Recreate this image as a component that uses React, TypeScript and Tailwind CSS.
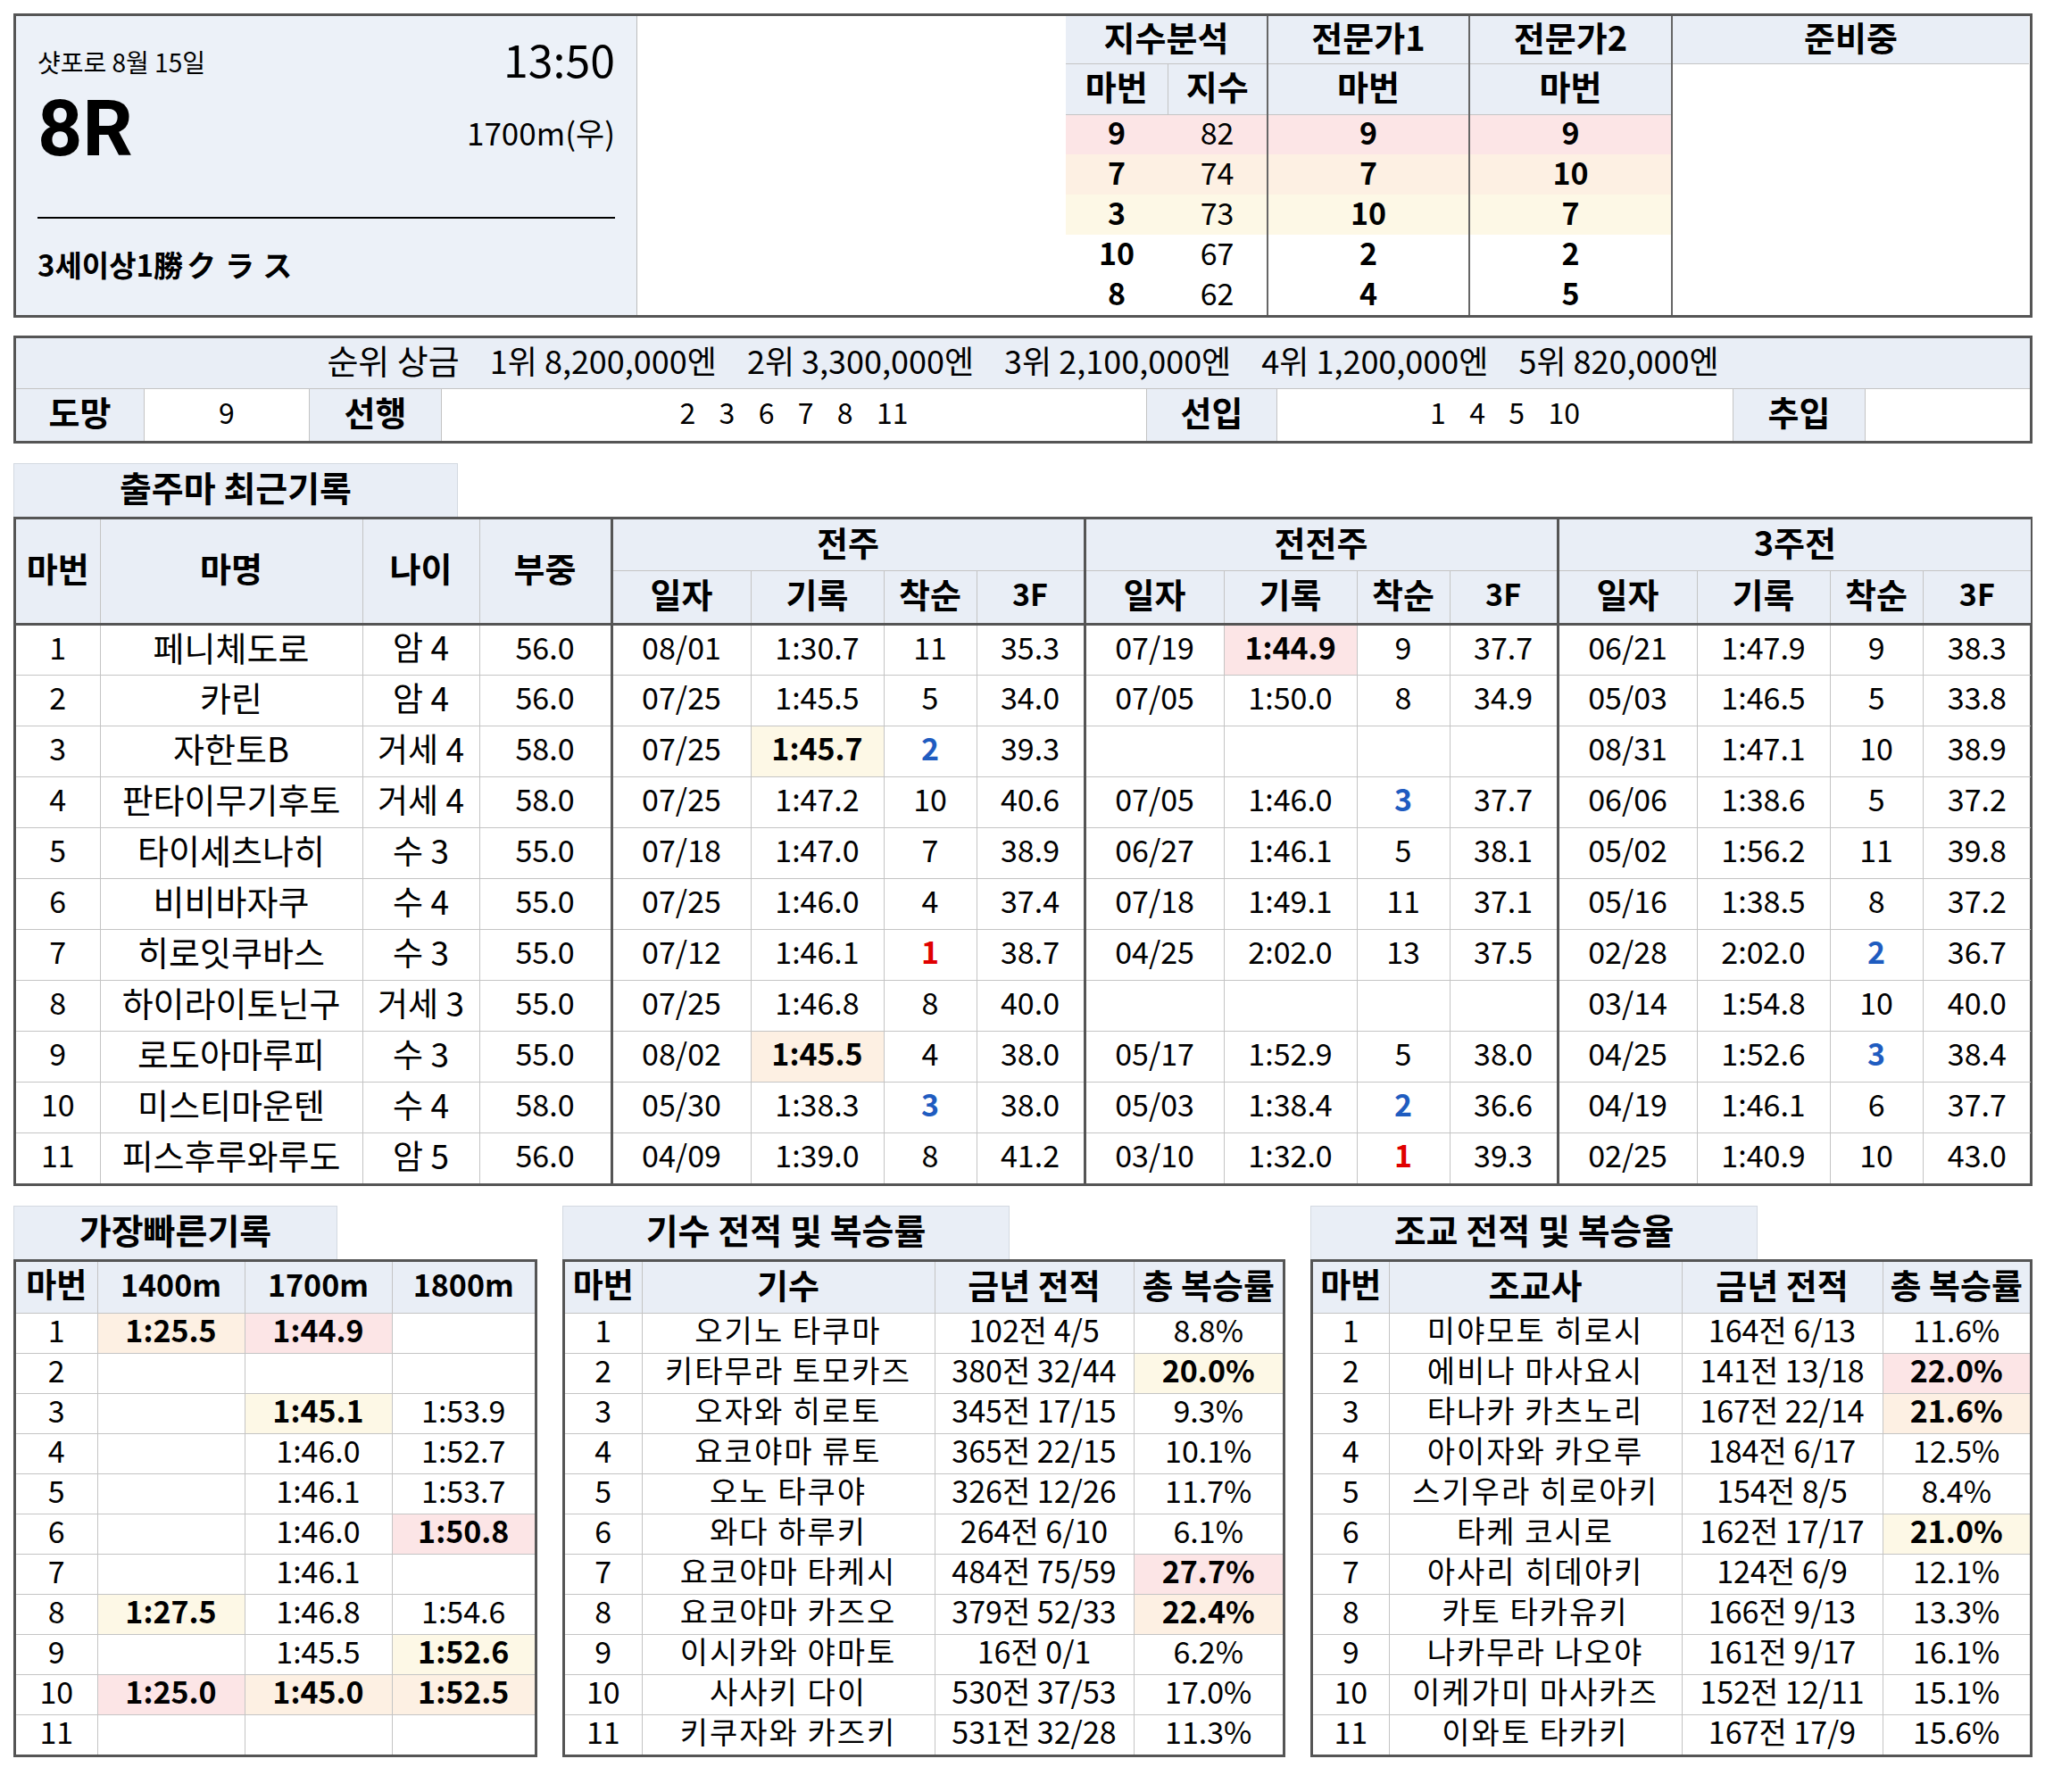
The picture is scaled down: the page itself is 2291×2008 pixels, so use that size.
import React from 'react';

const FONT = "font-['Noto_Sans_CJK_KR','Noto_Sans',sans-serif]";
const HEAD_BG = 'bg-[#e9eef6]';
const HL: Record<string, string> = {
  p: 'bg-[#fce5e6]',
  o: 'bg-[#fdf0e3]',
  y: 'bg-[#fdf8e6]',
};

type Race = { d: string; t: string; r: string; f: string; h?: string };

const empty: Race = { d: '', t: '', r: '', f: '' };

const horses: { no: number; name: string; age: string; wt: string; runs: Race[] }[] = [
  { no: 1, name: '페니체도로', age: '암 4', wt: '56.0', runs: [
    { d: '08/01', t: '1:30.7', r: '11', f: '35.3' },
    { d: '07/19', t: '1:44.9', r: '9', f: '37.7', h: 'p' },
    { d: '06/21', t: '1:47.9', r: '9', f: '38.3' },
  ] },
  { no: 2, name: '카린', age: '암 4', wt: '56.0', runs: [
    { d: '07/25', t: '1:45.5', r: '5', f: '34.0' },
    { d: '07/05', t: '1:50.0', r: '8', f: '34.9' },
    { d: '05/03', t: '1:46.5', r: '5', f: '33.8' },
  ] },
  { no: 3, name: '자한토B', age: '거세 4', wt: '58.0', runs: [
    { d: '07/25', t: '1:45.7', r: '2', f: '39.3', h: 'y' },
    empty,
    { d: '08/31', t: '1:47.1', r: '10', f: '38.9' },
  ] },
  { no: 4, name: '판타이무기후토', age: '거세 4', wt: '58.0', runs: [
    { d: '07/25', t: '1:47.2', r: '10', f: '40.6' },
    { d: '07/05', t: '1:46.0', r: '3', f: '37.7' },
    { d: '06/06', t: '1:38.6', r: '5', f: '37.2' },
  ] },
  { no: 5, name: '타이세츠나히', age: '수 3', wt: '55.0', runs: [
    { d: '07/18', t: '1:47.0', r: '7', f: '38.9' },
    { d: '06/27', t: '1:46.1', r: '5', f: '38.1' },
    { d: '05/02', t: '1:56.2', r: '11', f: '39.8' },
  ] },
  { no: 6, name: '비비바자쿠', age: '수 4', wt: '55.0', runs: [
    { d: '07/25', t: '1:46.0', r: '4', f: '37.4' },
    { d: '07/18', t: '1:49.1', r: '11', f: '37.1' },
    { d: '05/16', t: '1:38.5', r: '8', f: '37.2' },
  ] },
  { no: 7, name: '히로잇쿠바스', age: '수 3', wt: '55.0', runs: [
    { d: '07/12', t: '1:46.1', r: '1', f: '38.7' },
    { d: '04/25', t: '2:02.0', r: '13', f: '37.5' },
    { d: '02/28', t: '2:02.0', r: '2', f: '36.7' },
  ] },
  { no: 8, name: '하이라이토닌구', age: '거세 3', wt: '55.0', runs: [
    { d: '07/25', t: '1:46.8', r: '8', f: '40.0' },
    empty,
    { d: '03/14', t: '1:54.8', r: '10', f: '40.0' },
  ] },
  { no: 9, name: '로도아마루피', age: '수 3', wt: '55.0', runs: [
    { d: '08/02', t: '1:45.5', r: '4', f: '38.0', h: 'o' },
    { d: '05/17', t: '1:52.9', r: '5', f: '38.0' },
    { d: '04/25', t: '1:52.6', r: '3', f: '38.4' },
  ] },
  { no: 10, name: '미스티마운텐', age: '수 4', wt: '58.0', runs: [
    { d: '05/30', t: '1:38.3', r: '3', f: '38.0' },
    { d: '05/03', t: '1:38.4', r: '2', f: '36.6' },
    { d: '04/19', t: '1:46.1', r: '6', f: '37.7' },
  ] },
  { no: 11, name: '피스후루와루도', age: '암 5', wt: '56.0', runs: [
    { d: '04/09', t: '1:39.0', r: '8', f: '41.2' },
    { d: '03/10', t: '1:32.0', r: '1', f: '39.3' },
    { d: '02/25', t: '1:40.9', r: '10', f: '43.0' },
  ] },
];

// [value, highlight]
const fastest: [string, string][][] = [
  [['1:25.5', 'o'], ['1:44.9', 'p'], ['', '']],
  [['', ''], ['', ''], ['', '']],
  [['', ''], ['1:45.1', 'y'], ['1:53.9', '']],
  [['', ''], ['1:46.0', ''], ['1:52.7', '']],
  [['', ''], ['1:46.1', ''], ['1:53.7', '']],
  [['', ''], ['1:46.0', ''], ['1:50.8', 'p']],
  [['', ''], ['1:46.1', ''], ['', '']],
  [['1:27.5', 'y'], ['1:46.8', ''], ['1:54.6', '']],
  [['', ''], ['1:45.5', ''], ['1:52.6', 'y']],
  [['1:25.0', 'p'], ['1:45.0', 'o'], ['1:52.5', 'o']],
  [['', ''], ['', ''], ['', '']],
];

const jockeys: [string, string, string, string][] = [
  ['오기노 타쿠마', '102전 4/5', '8.8%', ''],
  ['키타무라 토모카즈', '380전 32/44', '20.0%', 'y'],
  ['오자와 히로토', '345전 17/15', '9.3%', ''],
  ['요코야마 류토', '365전 22/15', '10.1%', ''],
  ['오노 타쿠야', '326전 12/26', '11.7%', ''],
  ['와다 하루키', '264전 6/10', '6.1%', ''],
  ['요코야마 타케시', '484전 75/59', '27.7%', 'p'],
  ['요코야마 카즈오', '379전 52/33', '22.4%', 'o'],
  ['이시카와 야마토', '16전 0/1', '6.2%', ''],
  ['사사키 다이', '530전 37/53', '17.0%', ''],
  ['키쿠자와 카즈키', '531전 32/28', '11.3%', ''],
];

const trainers: [string, string, string, string][] = [
  ['미야모토 히로시', '164전 6/13', '11.6%', ''],
  ['에비나 마사요시', '141전 13/18', '22.0%', 'p'],
  ['타나카 카츠노리', '167전 22/14', '21.6%', 'o'],
  ['아이자와 카오루', '184전 6/17', '12.5%', ''],
  ['스기우라 히로아키', '154전 8/5', '8.4%', ''],
  ['타케 코시로', '162전 17/17', '21.0%', 'y'],
  ['아사리 히데아키', '124전 6/9', '12.1%', ''],
  ['카토 타카유키', '166전 9/13', '13.3%', ''],
  ['나카무라 나오야', '161전 9/17', '16.1%', ''],
  ['이케가미 마사카즈', '152전 12/11', '15.1%', ''],
  ['이와토 타카키', '167전 17/9', '15.6%', ''],
];

const index = [
  ['9', '82', '9', '9'],
  ['7', '74', '7', '10'],
  ['3', '73', '10', '7'],
  ['10', '67', '2', '2'],
  ['8', '62', '4', '5'],
];
const indexBg = [HL.p, HL.o, HL.y, '', ''];

// cells nudge their text up a little, the source font sits higher in its box
const thin = 'border border-[#c4c4c4] pt-0 pb-[7px] px-0';
const thick = 'border-l-[3px] border-l-[#555]';
const KO = 'text-[38px]';

function rankClass(r: string) {
  if (r === '1') return 'text-[#e00000] font-bold';
  if (r === '2' || r === '3') return 'text-[#1f5cc0] font-bold';
  return '';
}

function Header() {
  const th = `${HEAD_BG} font-bold text-[38px] leading-none text-center`;
  return (
    <div className="flex h-[341px] border-[3px] border-[#555]">
      <div className="w-[696px] bg-[#ecf1f8] border-r border-[#bcbcbc] px-[24px] pt-[22px] flex flex-col">
        <div className="h-[58px] flex items-center justify-between">
          <span className="text-[28px] leading-none">샷포로 8월 15일</span>
          <span className="text-[50px] leading-none mb-[8px]">13:50</span>
        </div>
        <div className="h-[92px] flex items-center justify-between">
          <span className="font-['Roboto',sans-serif] text-[88px] font-bold leading-none">8R</span>
          <span className="text-[35px] leading-none mt-[6px]">1700m(우)</span>
        </div>
        <div className="mt-[53px] h-[2px] bg-black" />
        <div className="mt-[34px] h-[34px] flex items-center text-[33px] font-bold leading-none">
          3세이상1勝<span className="ml-[4px] tracking-[10px]">クラス</span>
        </div>
      </div>
      <div className="w-[480px] bg-white" />
      <table className="table-fixed border-collapse border-hidden w-[1079px] h-full">
        <colgroup>
          <col className="w-[114px]" />
          <col className="w-[112px]" />
          <col className="w-[226px]" />
          <col className="w-[227px]" />
          <col className="w-[400px]" />
        </colgroup>
        <tbody>
          <tr className="h-[53px]">
            <th colSpan={2} className={`${th} ${thin} border-l-[#bcbcbc]`}>지수분석</th>
            <th className={`${th} ${thin} border-l-2 border-l-[#666]`}>전문가1</th>
            <th className={`${th} ${thin} border-l-2 border-l-[#666]`}>전문가2</th>
            <th className={`${th} ${thin} border-l-2 border-l-[#666]`}>준비중</th>
          </tr>
          <tr className="h-[57px]">
            <th className={`${th} ${thin}`}>마번</th>
            <th className={`${th} ${thin}`}>지수</th>
            <th className={`${th} ${thin} border-l-2 border-l-[#666]`}>마번</th>
            <th className={`${th} ${thin} border-l-2 border-l-[#666]`}>마번</th>
            <td rowSpan={6} className={`bg-white ${thin} border-l-2 border-l-[#666]`} />
          </tr>
          {index.map((r, i) => (
            <tr key={i} className={`h-[45px] text-[34px] leading-none text-center ${indexBg[i]}`}>
              <td className="font-bold pb-[5px]">{r[0]}</td>
              <td className="pb-[5px]">{r[1]}</td>
              <td className="font-bold pb-[5px] border-l-2 border-[#666]">{r[2]}</td>
              <td className="font-bold pb-[5px] border-l-2 border-[#666]">{r[3]}</td>
            </tr>
          ))}
        </tbody>
      </table>
    </div>
  );
}

function Prize() {
  const label = `${HEAD_BG} font-bold text-[38px] flex items-center justify-center pb-[8px] border-r border-[#c4c4c4]`;
  const val = 'bg-white text-[32px] flex items-center justify-center pb-[8px] border-r border-[#c4c4c4] whitespace-pre [word-spacing:6px]';
  return (
    <div className="mt-[20px] border-[3px] border-[#555]">
      <div className={`h-[57px] ${HEAD_BG} border-b border-[#c4c4c4] flex items-center justify-center gap-[34px] pb-[8px] text-[36px] leading-none`}>
        <span className="text-[38px]">순위 상금</span>
        <span>1위 8,200,000엔</span>
        <span>2위 3,300,000엔</span>
        <span>3위 2,100,000엔</span>
        <span>4위 1,200,000엔</span>
        <span>5위 820,000엔</span>
      </div>
      <div className="h-[58px] flex leading-none">
        <div className={`w-[144px] ${label}`}>도망</div>
        <div className={`w-[185px] ${val}`}>9</div>
        <div className={`w-[148px] ${label}`}>선행</div>
        <div className={`w-[790px] ${val}`}>{'2  3  6  7  8  11'}</div>
        <div className={`w-[146px] ${label}`}>선입</div>
        <div className={`w-[511px] ${val}`}>{'1  4  5  10'}</div>
        <div className={`w-[148px] ${label}`}>추입</div>
        <div className="flex-1 bg-white" />
      </div>
    </div>
  );
}

function Tab({ w, children }: { w: string; children: React.ReactNode }) {
  return (
    <div className={`${w} h-[60px] ${HEAD_BG} border-t border-x border-[#d3d9e1] flex items-center justify-center pb-[8px] text-[39px] font-bold leading-none`}>
      {children}
    </div>
  );
}

function Recent() {
  const th = `${HEAD_BG} ${thin} font-bold ${KO} leading-none text-center`;
  const groups = ['전주', '전전주', '3주전'];
  return (
    <div className="mt-[22px]">
      <Tab w="w-[498px]">출주마 최근기록</Tab>
      <div className="border-[3px] border-[#555]">
        <table className="table-fixed border-collapse border-hidden w-[2256px]">
          <colgroup>
            <col className="w-[94px]" />
            <col className="w-[294px]" />
            <col className="w-[131px]" />
            <col className="w-[148px]" />
            {groups.map((g) => (
              <React.Fragment key={g}>
                <col className="w-[156px]" />
                <col className="w-[149px]" />
                <col className="w-[104px]" />
                <col className="w-[121px]" />
              </React.Fragment>
            ))}
          </colgroup>
          <thead>
            <tr className="h-[57px]">
              <th rowSpan={2} className={`${th} border-b-[3px] border-b-[#555]`}>마번</th>
              <th rowSpan={2} className={`${th} border-b-[3px] border-b-[#555]`}>마명</th>
              <th rowSpan={2} className={`${th} border-b-[3px] border-b-[#555]`}>나이</th>
              <th rowSpan={2} className={`${th} border-b-[3px] border-b-[#555]`}>부중</th>
              {groups.map((g) => (
                <th key={g} colSpan={4} className={`${th} ${thick}`}>{g}</th>
              ))}
            </tr>
            <tr className="h-[60px]">
              {groups.map((g) => (
                <React.Fragment key={g}>
                  <th className={`${th} ${thick} border-b-[3px] border-b-[#555]`}>일자</th>
                  <th className={`${th} border-b-[3px] border-b-[#555]`}>기록</th>
                  <th className={`${th} border-b-[3px] border-b-[#555]`}>착순</th>
                  <th className={`${th} !text-[34px] border-b-[3px] border-b-[#555]`}>3F</th>
                </React.Fragment>
              ))}
            </tr>
          </thead>
          <tbody>
            {horses.map((h) => (
              <tr key={h.no} className="h-[57px] text-[34px] leading-none text-center">
                <td className={thin}>{h.no}</td>
                <td className={`${thin} ${KO}`}>{h.name}</td>
                <td className={`${thin} text-[37px]`}>{h.age}</td>
                <td className={thin}>{h.wt}</td>
                {h.runs.map((r, i) => (
                  <React.Fragment key={i}>
                    <td className={`${thin} ${thick}`}>{r.d}</td>
                    <td className={`${thin} ${r.h ? `${HL[r.h]} font-bold` : ''}`}>{r.t}</td>
                    <td className={`${thin} ${rankClass(r.r)}`}>{r.r}</td>
                    <td className={thin}>{r.f}</td>
                  </React.Fragment>
                ))}
              </tr>
            ))}
          </tbody>
        </table>
      </div>
    </div>
  );
}

function SmallTable({
  tab,
  tabW,
  width,
  cols,
  heads,
  sizes,
  rows,
}: {
  tab: string;
  tabW: string;
  width: string;
  cols: string[];
  heads: [string, string][];
  sizes: string[];
  rows: [string, string][][];
}) {
  const th = `${HEAD_BG} ${thin} font-bold leading-none text-center whitespace-nowrap`;
  return (
    <div className={width}>
      <Tab w={tabW}>{tab}</Tab>
      <div className="border-[3px] border-[#555]">
        <table className="table-fixed border-collapse border-hidden w-full">
          <colgroup>
            {cols.map((c, i) => (
              <col key={i} className={c} />
            ))}
          </colgroup>
          <thead>
            <tr className="h-[57px]">
              {heads.map(([h, s]) => (
                <th key={h} className={`${th} ${s}`}>{h}</th>
              ))}
            </tr>
          </thead>
          <tbody>
            {rows.map((r, i) => (
              <tr key={i} className="h-[45px] text-[34px] leading-none text-center">
                <td className={thin}>{i + 1}</td>
                {r.map(([v, h], j) => (
                  <td key={j} className={`${thin} ${sizes[j]} whitespace-nowrap ${h ? `${HL[h]} font-bold` : ''}`}>{v}</td>
                ))}
              </tr>
            ))}
          </tbody>
        </table>
      </div>
    </div>
  );
}

export default function App() {
  const jRows = jockeys.map((j) => [[j[0], ''], [j[1], ''], [j[2], j[3]]] as [string, string][]);
  const tRows = trainers.map((j) => [[j[0], ''], [j[1], ''], [j[2], j[3]]] as [string, string][]);
  const nameSize = 'text-[34px] tracking-[2px]';
  return (
    <div className={`w-[2291px] min-h-[2008px] bg-white text-black ${FONT} pt-[15px] pl-[15px]`}>
      <div className="w-[2262px]">
        <Header />
        <Prize />
        <Recent />
        <div className="mt-[22px] flex gap-[28px]">
          <SmallTable
            tab="가장빠른기록"
            tabW="w-[363px]"
            width="w-[587px]"
            cols={['w-[91px]', 'w-[165px]', 'w-[165px]', 'w-[160px]']}
            heads={[['마번', 'text-[37px]'], ['1400m', 'text-[34px]'], ['1700m', 'text-[34px]'], ['1800m', 'text-[34px]']]}
            sizes={['text-[34px]', 'text-[34px]', 'text-[34px]']}
            rows={fastest}
          />
          <SmallTable
            tab="기수 전적 및 복승률"
            tabW="w-[501px]"
            width="w-[810px]"
            cols={['w-[86px]', 'w-[328px]', 'w-[223px]', 'w-[167px]']}
            heads={[['마번', 'text-[37px]'], ['기수', 'text-[38px]'], ['금년 전적', 'text-[38px]'], ['총 복승률', 'text-[38px]']]}
            sizes={[nameSize, 'text-[34px]', 'text-[34px]']}
            rows={jRows}
          />
          <SmallTable
            tab="조교 전적 및 복승율"
            tabW="w-[501px]"
            width="w-[809px]"
            cols={['w-[85px]', 'w-[328px]', 'w-[225px]', 'w-[165px]']}
            heads={[['마번', 'text-[37px]'], ['조교사', 'text-[38px]'], ['금년 전적', 'text-[38px]'], ['총 복승률', 'text-[38px]']]}
            sizes={[nameSize, 'text-[34px]', 'text-[34px]']}
            rows={tRows}
          />
        </div>
      </div>
    </div>
  );
}
